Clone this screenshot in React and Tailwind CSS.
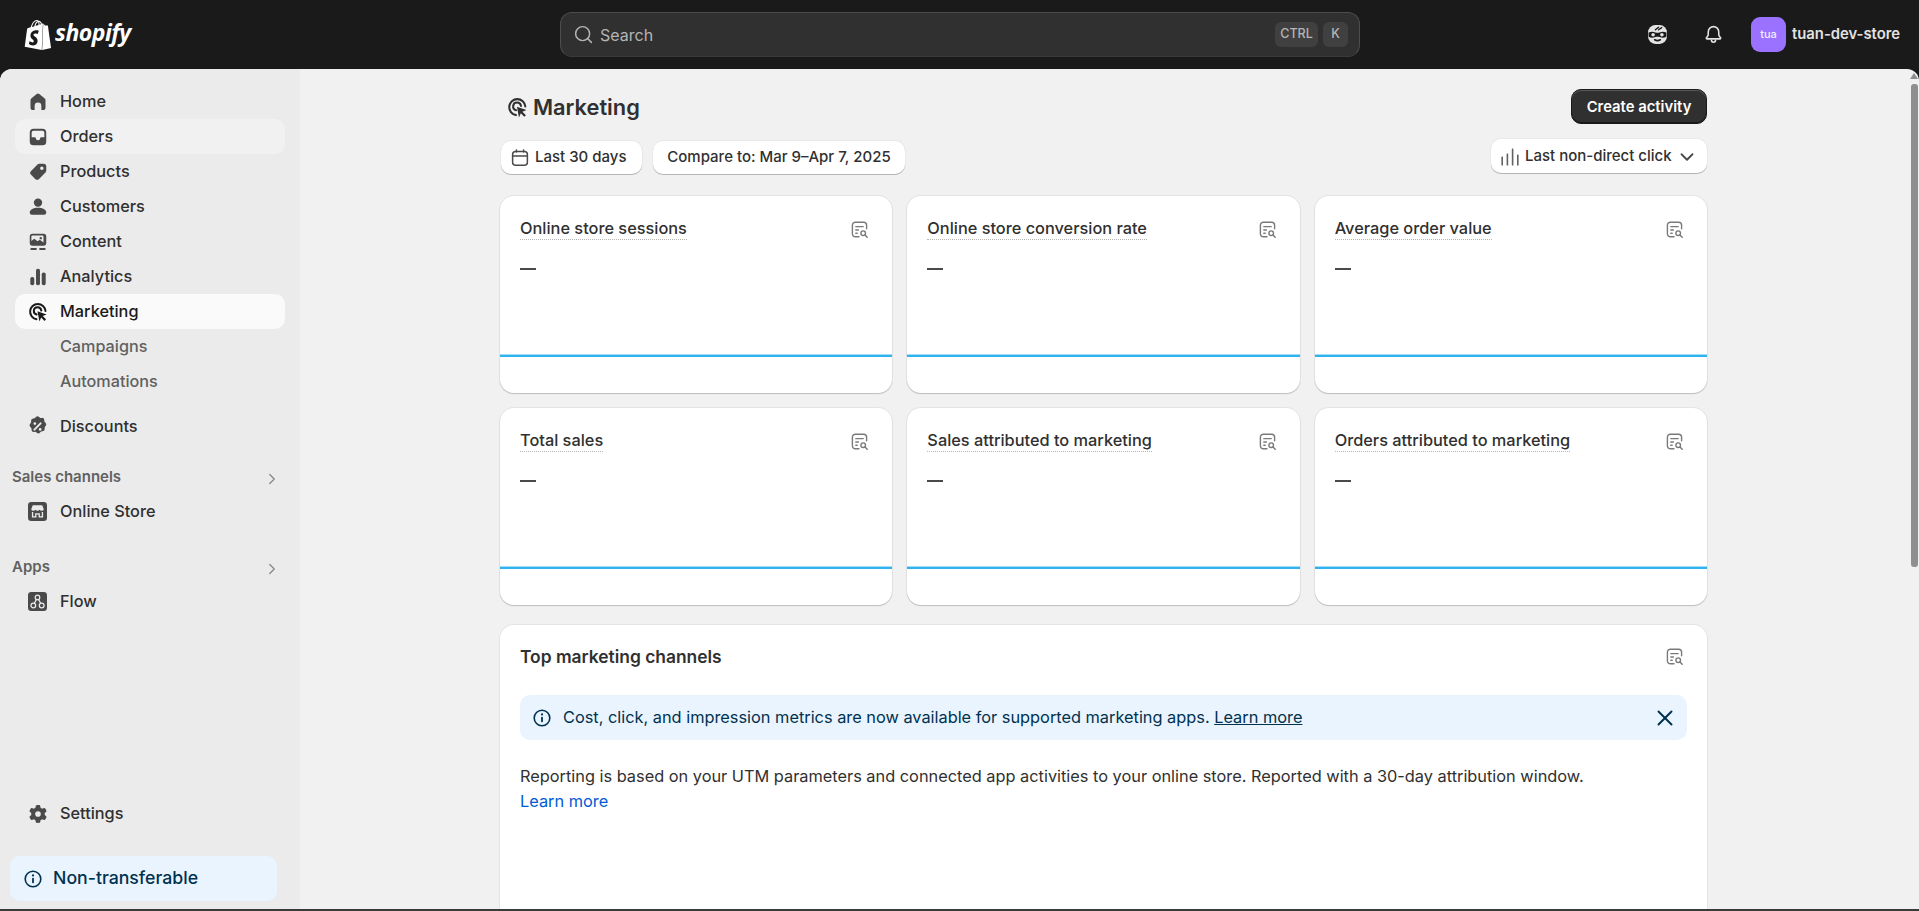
import React from "react";
import { SiShopify } from "react-icons/si";
import { FaGear } from "react-icons/fa6";
import { Search, ChevronRight, ChevronDown, X } from "lucide-react";

const Ico = ({ children, className = "w-[22px] h-[22px] text-[#4a4a4a]" }) => (
  <svg viewBox="0 0 20 20" fill="currentColor" className={className}>
    {children}
  </svg>
);

const HomeIcon = () => (
  <Ico className="w-6 h-6 text-[#4a4a4a]">
    <path d="M8.9 3.4a1.75 1.75 0 0 1 2.2 0l4.3 3.5c.5.4.85.95.85 1.55v6.1a2.2 2.2 0 0 1-2.25 2.2h-1.2v-3.5a2.8 2.8 0 0 0-5.6 0v3.5h-1.2a2.2 2.2 0 0 1-2.25-2.2v-6.1c0-.6.35-1.15.85-1.55z" />
  </Ico>
);
const OrdersIcon = () => (
  <Ico>
    <path
      fillRule="evenodd"
      d="M6 2.5h8a3.5 3.5 0 0 1 3.5 3.5v8a3.5 3.5 0 0 1-3.5 3.5h-8a3.5 3.5 0 0 1-3.5-3.5v-8a3.5 3.5 0 0 1 3.5-3.5zm0 1.75a1.75 1.75 0 0 0-1.75 1.75v4.25h2.9c.4 0 .75.3.85.7a2 2 0 0 0 4 0c.1-.4.45-.7.85-.7h2.9v-4.25a1.75 1.75 0 0 0-1.75-1.75z"
    />
  </Ico>
);
const ProductsIcon = () => (
  <Ico>
    <path
      fillRule="evenodd"
      d="M11.3 2.5h3.7a2.5 2.5 0 0 1 2.5 2.5v3.7c0 .66-.26 1.3-.73 1.77l-5.8 5.8a2.5 2.5 0 0 1-3.54 0l-3.7-3.7a2.5 2.5 0 0 1 0-3.54l5.8-5.8a2.5 2.5 0 0 1 1.77-.73zm2.2 5.6a1.6 1.6 0 1 0 0-3.2 1.6 1.6 0 0 0 0 3.2z"
    />
  </Ico>
);
const CustomersIcon = () => (
  <Ico>
    <circle cx="10" cy="6" r="3.8" />
    <path d="M2.5 15c0-2.6 3.4-4.3 7.5-4.3s7.5 1.7 7.5 4.3a2 2 0 0 1-2 2h-11a2 2 0 0 1-2-2z" />
  </Ico>
);
const ContentIcon = () => (
  <Ico>
    <path
      fillRule="evenodd"
      d="M5 2.5h10a2.5 2.5 0 0 1 2.5 2.5v6a2.5 2.5 0 0 1-2.5 2.5h-10a2.5 2.5 0 0 1-2.5-2.5v-6a2.5 2.5 0 0 1 2.5-2.5zm0 1.5a1 1 0 0 0-1 1v4l2.6-2 3 2.4 2-1.4 3.4 2.4v-5.4a1 1 0 0 0-1-1zm7.5 1.4a1.1 1.1 0 1 1 0 2.2 1.1 1.1 0 0 1 0-2.2z"
    />
    <rect x="3" y="15.5" width="6" height="1.8" rx=".9" />
    <rect x="11" y="15.5" width="6" height="1.8" rx=".9" />
  </Ico>
);
const AnalyticsIcon = () => (
  <Ico>
    <rect x="3" y="10" width="3.6" height="7.5" rx="1.6" />
    <rect x="8.2" y="2.5" width="3.6" height="15" rx="1.6" />
    <rect x="13.4" y="6" width="3.6" height="11.5" rx="1.6" />
  </Ico>
);
const MarketingIcon = ({ className = "w-[22px] h-[22px] text-[#1a1a1a]" }) => (
  <svg viewBox="0 0 20 20" className={className} fill="none">
    <path d="M8.6 16.6a7 7 0 1 1 8.2-7.5" stroke="currentColor" strokeWidth="1.8" strokeLinecap="round" />
    <path d="M8.8 12.3a3.4 3.4 0 1 1 4.2-3.6" stroke="currentColor" strokeWidth="1.8" strokeLinecap="round" />
    <path d="M9.5 9.3l8.3 2.9-3.5 1.5 3 3-1.4 1.4-3-3-1.6 3.5z" fill="currentColor" />
  </svg>
);
const DiscountsIcon = () => (
  <Ico className="w-[23px] h-[23px] text-[#4a4a4a]">
    <path
      fillRule="evenodd"
      d="M8.6 1.7a2 2 0 0 1 2.8 0l1 .9 1.4-.1a2 2 0 0 1 2.1 1.9l.1 1.4 1 1a2 2 0 0 1 .1 2.7l-.9 1.1.1 1.4a2 2 0 0 1-1.8 2.1l-1.4.2-.9 1a2 2 0 0 1-2.8.2l-1.1-.9-1.4.1a2 2 0 0 1-2.1-1.9l-.1-1.4-1-1a2 2 0 0 1-.1-2.7l.9-1.1-.1-1.4a2 2 0 0 1 1.8-2.1l1.4-.2zm3.7 4.8a.9.9 0 0 1 1.2 1.2l-5.8 5.8a.9.9 0 0 1-1.2-1.2zm-4.6-.3a1.2 1.2 0 1 1 0 2.4 1.2 1.2 0 0 1 0-2.4zm4.6 5.2a1.2 1.2 0 1 1 0 2.4 1.2 1.2 0 0 1 0-2.4z"
    />
  </Ico>
);
const StoreIcon = () => (
  <svg viewBox="0 0 20 20" className="w-[19px] h-[19px]">
    <rect x="0" y="0" width="20" height="20" rx="3.5" fill="#4a4a4a" />
    <path d="M5 3.5h10l1.6 4a2 2 0 0 1-2.2 1.6 2.7 2.7 0 0 1-2.2-.9 2.8 2.8 0 0 1-2.2 1 2.8 2.8 0 0 1-2.2-1 2.7 2.7 0 0 1-2.2.9A2 2 0 0 1 3.4 7.5z" fill="#ebebeb" />
    <path d="M4.8 10.5v5.2h3.4v-3.2h3.6v3.2h3.4v-5.2" fill="none" stroke="#ebebeb" strokeWidth="1.4" />
  </svg>
);
const FlowIcon = () => (
  <svg viewBox="0 0 20 20" className="w-[19px] h-[19px]" fill="none">
    <rect x="0" y="0" width="20" height="20" rx="3.5" fill="#4a4a4a" />
    <g stroke="#ebebeb" strokeWidth="1.3">
      <circle cx="10" cy="5.7" r="2.4" />
      <circle cx="5.6" cy="14.2" r="2.5" />
      <circle cx="14.4" cy="14.2" r="2.5" />
      <path d="M8.9 7.8l-2.2 4M11.1 7.8l2.2 4" />
    </g>
  </svg>
);
const InfoIcon = ({ className = "w-[18px] h-[18px]" }) => (
  <svg viewBox="0 0 18 18" className={className} fill="none">
    <circle cx="9" cy="9" r="7.8" stroke="currentColor" strokeWidth="1.6" />
    <rect x="8.1" y="7.8" width="1.8" height="5.4" rx=".8" fill="currentColor" />
    <circle cx="9" cy="5.4" r="1.1" fill="currentColor" />
  </svg>
);
const ReportIcon = ({ className = "" }) => (
  <svg viewBox="0 0 18 18" className={`w-[18px] h-[18px] text-[#7a7a7a] ${className}`} fill="none">
    <path d="M8 15.8h-3.6a3 3 0 0 1-3-3v-8.6a3 3 0 0 1 3-3h8.2a3 3 0 0 1 3 3v3.6" stroke="currentColor" strokeWidth="1.4" strokeLinecap="round" />
    <path d="M4.8 5.6h7.4M4.8 9h2.6M4.8 12.2h1.4" stroke="currentColor" strokeWidth="1.4" strokeLinecap="round" />
    <circle cx="12.2" cy="12.2" r="2.3" stroke="currentColor" strokeWidth="1.4" />
    <path d="M14 14l2.2 2.2" stroke="currentColor" strokeWidth="1.5" strokeLinecap="round" />
  </svg>
);
const CalendarIcon = () => (
  <svg viewBox="0 0 18 18" className="w-[18px] h-[18px] text-[#4a4a4a]" fill="none" stroke="currentColor" strokeWidth="1.5">
    <rect x="1.6" y="2.6" width="14.8" height="13.6" rx="3" />
    <path d="M1.6 7h14.8M5.4 1v2M12.6 1v2" strokeLinecap="round" />
  </svg>
);
const AttributionIcon = () => (
  <svg viewBox="0 0 18 18" className="w-[18px] h-[18px] text-[#616161]" fill="currentColor">
    <rect x=".4" y="8.5" width="1.6" height="9" rx=".5" />
    <rect x="5.6" y="5.5" width="1.6" height="12" rx=".5" />
    <rect x="10.8" y=".5" width="1.6" height="17" rx=".5" />
    <rect x="16" y="6.5" width="1.6" height="11" rx=".5" />
  </svg>
);
const SlothIcon = () => (
  <svg viewBox="0 0 20 20" className="w-[21px] h-[21px] text-[#e3e3e3]" fill="none">
    <rect x="1" y="1" width="18" height="18" rx="7" fill="currentColor" />
    <path d="M1.5 8.2c2.5-1.2 4.500-1 6.500-.2 1.400.5 2.700.5 4 0 2-.8 4-1 6.500.2v4c-2.500 1.200-4.500 1-6.500.2-1.300-.5-2.700-.5-4 0-2 .8-4 1-6.500-.2z" fill="#1a1a1a" />
    <circle cx="5.8" cy="10.2" r="1.7" fill="currentColor" />
    <circle cx="14.2" cy="10.2" r="1.7" fill="currentColor" />
    <path d="M7.3 15c1.700 1 3.700 1 5.400 0" stroke="#1a1a1a" strokeWidth="1.5" strokeLinecap="round" />
    <path d="M8 5.5l3-2.500M11 5.500l3-2" stroke="#1a1a1a" strokeWidth="1.3" strokeLinecap="round" />
  </svg>
);
const BellIcon = () => (
  <svg viewBox="0 0 20 20" className="w-[21px] h-[21px] text-[#e3e3e3]" fill="none" stroke="currentColor" strokeWidth="1.5" strokeLinejoin="round">
    <path d="M10 2.5a5 5 0 0 0-5 5v2.300c0 .8-.3 1.500-.8 2.100l-.9 1.100c-.4.500 0 1.200.6 1.200h12.200c.6 0 1-.7.6-1.200l-.9-1.100c-.5-.6-.8-1.300-.8-2.100v-2.300a5 5 0 0 0-5-5z" />
    <path d="M8 15c0 1.300.8 2.300 2 2.300s2-1 2-2.300" />
  </svg>
);

const navTop = [
  { label: "Home", icon: <HomeIcon /> },
  { label: "Orders", icon: <OrdersIcon />, hover: true },
  { label: "Products", icon: <ProductsIcon /> },
  { label: "Customers", icon: <CustomersIcon /> },
  { label: "Content", icon: <ContentIcon /> },
  { label: "Analytics", icon: <AnalyticsIcon /> },
];

const metrics = [
  "Online store sessions",
  "Online store conversion rate",
  "Average order value",
  "Total sales",
  "Sales attributed to marketing",
  "Orders attributed to marketing",
];

const NavItem = ({ icon, label, className = "", textClass = "text-[#303030]" }) => (
  <div className={`h-[35px] mx-[15px] pl-[10px] flex items-center rounded-[10px] ${className}`}>
    <span className="w-[25px] h-[25px] flex items-center justify-center shrink-0">{icon}</span>
    <span className={`ml-[10px] text-[16.3px] font-medium ${textClass}`}>{label}</span>
  </div>
);

const SubItem = ({ label }) => (
  <div className="h-[35px] pl-[60px] flex items-center text-[16.2px] font-medium text-[#616161]">{label}</div>
);

const SectionHead = ({ label, className = "" }) => (
  <div className={`h-[20px] pl-[12px] pr-[19px] flex items-center justify-between ${className}`}>
    <span className="text-[15px] font-semibold text-[#616161]">{label}</span>
    <ChevronRight className="mt-[3px] w-[18px] h-[18px] text-[#8a8a8a]" strokeWidth={1.8} />
  </div>
);

const Sidebar = () => (
  <aside className="w-[300px] shrink-0 bg-[#ebebeb] flex flex-col pt-[15px] pb-[8px]">
    {navTop.map((n) => (
      <NavItem key={n.label} icon={n.icon} label={n.label} className={n.hover ? "bg-[#f1f1f1]" : ""} />
    ))}
    <NavItem icon={<MarketingIcon />} label="Marketing" className="bg-[#fafafa]" textClass="text-[#1a1a1a]" />
    <SubItem label="Campaigns" />
    <SubItem label="Automations" />
    <NavItem icon={<DiscountsIcon />} label="Discounts" className="mt-[10px]" />
    <SectionHead label="Sales channels" className="mt-[23px]" />
    <NavItem icon={<StoreIcon />} label="Online Store" className="mt-[7px]" />
    <SectionHead label="Apps" className="mt-[28px]" />
    <NavItem icon={<FlowIcon />} label="Flow" className="mt-[7px]" />
    <div className="flex-1" />
    <NavItem icon={<FaGear className="w-[18px] h-[18px] text-[#4a4a4a]" />} label="Settings" />
    <div className="mt-[25px] ml-[10px] w-[267px] h-[45px] rounded-[10px] bg-[#eaf4ff] flex items-center pl-[14px] text-[#00324f]">
      <InfoIcon />
      <span className="ml-[11px] text-[17.7px] font-medium">Non-transferable</span>
    </div>
  </aside>
);

const Pill = ({ children, className = "" }) => (
  <div className={`bg-white rounded-[10px] flex items-center text-[#303030] text-[15px] font-medium shadow-[0_1px_0_0_#b5b5b5,0_0_0_1px_#e9e9e9] ${className}`}>
    {children}
  </div>
);

const MetricCard = ({ title }) => (
  <div className="h-[197px] bg-white rounded-[14px] shadow-[0_1px_1px_0_#bdbdbd,0_0_0_1px_#e4e4e4] flex flex-col">
    <div className="px-[20px] pt-[21px] flex justify-between">
      <span className="text-[#303030] text-[16.33px] font-medium leading-[22px] border-b border-dotted border-[#b5b5b5]">{title}</span>
      <ReportIcon className="mt-[4px] mr-[3px]" />
    </div>
    <div className="mt-[28px] ml-[20px] w-4 h-[2px] bg-[#4a4a4a]" />
    <div className="mt-[84px] h-[3px] bg-[#2fb4ef] border-t border-[#a0dcf7]" />
  </div>
);

export default function App() {
  return (
    <div className="h-[911px] w-full overflow-hidden bg-[#1a1a1a] flex flex-col font-['Inter',sans-serif]">
      <header className="h-[69px] shrink-0 flex items-center">
        <div className="w-[560px] shrink-0 pl-[23px] flex items-center">
          <SiShopify className="w-[30px] h-[30px] text-white" />
          <span className="ml-[2px] text-white text-[23px] font-bold italic tracking-[-0.5px] font-['Open_Sans',sans-serif] leading-none pb-[4px]">shopify</span>
        </div>
        <div className="w-[800px] h-[45px] rounded-[12px] bg-[#303030] border border-[#4d4d4d] border-b-[#3a3a3a] flex items-center pl-[12px] pr-[11px]">
          <Search className="w-[21px] h-[21px] text-[#b5b5b5]" strokeWidth={1.7} />
          <span className="ml-[6px] text-[16px] text-[#b5b5b5]">Search</span>
          <div className="ml-auto flex gap-[5px] text-[12.5px] font-medium text-[#b5b5b5]">
            <span className="w-[43px] h-[25px] rounded-[6px] bg-[#404040] flex items-center justify-center">CTRL</span>
            <span className="w-[25px] h-[25px] rounded-[6px] bg-[#404040] flex items-center justify-center">K</span>
          </div>
        </div>
        <div className="ml-auto flex items-center pr-[19px]">
          <SlothIcon />
          <span className="ml-[35px]"><BellIcon /></span>
          <div className="ml-[27px] w-[35px] h-[35px] rounded-[9px] bg-[#9b72ff] flex items-center justify-center text-[#f3eeff] text-[11px] font-medium">tua</div>
          <span className="ml-[6px] text-[#e3e3e3] text-[14.8px] font-semibold">tuan-dev-store</span>
        </div>
      </header>

      <div className="h-[840px] shrink-0 rounded-t-[12px] overflow-hidden flex bg-[#f1f1f1]">
        <Sidebar />
        <main className="flex-1 min-w-0 relative overflow-hidden">
          <div className="ml-[200px] w-[1207px] pt-[20px]">
            <div className="h-[35px] flex items-center justify-between">
              <div className="flex items-center pl-[6px] pt-[2px]">
                <MarketingIcon className="w-[23px] h-[23px] text-[#303030]" />
                <h1 className="ml-[4px] text-[21.8px] font-semibold text-[#303030]">Marketing</h1>
              </div>
              <button className="h-[35px] w-[136px] pt-[1px] rounded-[10px] bg-[#303030] border border-[#1a1a1a] text-white text-[14.85px] font-semibold shadow-[inset_0_1px_0_0_#5a5a5a,inset_0_-1px_0_0_#1a1a1a]">
                Create activity
              </button>
            </div>
            <div className="mt-[17px] h-[33px] flex items-start gap-[11px]">
              <Pill className="h-[33px] w-[141px] ml-[1px] pl-[10px]">
                <CalendarIcon />
                <span className="ml-[6px]">Last 30 days</span>
              </Pill>
              <Pill className="h-[33px] w-[252px] justify-center">Compare to: Mar 9–Apr 7, 2025</Pill>
              <Pill className="h-[34px] -mt-[2px] pt-[1px] w-[216px] ml-auto pl-[10px]">
                <AttributionIcon />
                <span className="ml-[6px]">Last non-direct click</span>
                <ChevronDown className="ml-[4px] w-[22px] h-[22px] text-[#4a4a4a]" strokeWidth={2} />
              </Pill>
            </div>
            <div className="mt-[22px] grid grid-cols-3 gap-[15px]">
              {metrics.map((m) => (
                <MetricCard key={m} title={m} />
              ))}
            </div>
            <section className="mt-[20px] h-[400px] bg-white rounded-t-[14px] shadow-[0_0_0_1px_#e4e4e4] px-[20px] pt-[20px]">
              <div className="flex items-center justify-between h-[24px]">
                <h2 className="text-[17.4px] font-semibold text-[#303030]">Top marketing channels</h2>
                <ReportIcon className="mr-[3px]" />
              </div>
              <div className="mt-[26px] h-[45px] rounded-[10px] bg-[#eaf4ff] flex items-center pl-[13px] pr-[9px] text-[#00324f]">
                <InfoIcon />
                <span className="ml-[12px] text-[16.33px]">
                  Cost, click, and impression metrics are now available for supported marketing apps.{" "}
                  <span className="underline">Learn more</span>
                </span>
                <X className="ml-auto w-[26px] h-[26px]" strokeWidth={1.8} />
              </div>
              <p className="mt-[24px] text-[16.33px] leading-[25px] text-[#303030]">
                Reporting is based on your UTM parameters and connected app activities to your online store. Reported with a 30-day attribution window.
                <br />
                <span className="text-[#005bd3]">Learn more</span>
              </p>
            </section>
          </div>
          {/* scrollbar */}
          <div className="absolute top-0 right-0 bottom-0 w-[10px] flex flex-col items-center">
            <div className="mt-[4px] w-0 h-0 border-x-[4.5px] border-x-transparent border-b-[6px] border-b-[#8f8f8f]" />
            <div className="mt-[5px] w-[7px] h-[483px] rounded-[3px] bg-[#8f8f8f]" />
          </div>
        </main>
      </div>
      <div className="h-[2px] shrink-0 bg-[#3a3a3a]" />
    </div>
  );
}
